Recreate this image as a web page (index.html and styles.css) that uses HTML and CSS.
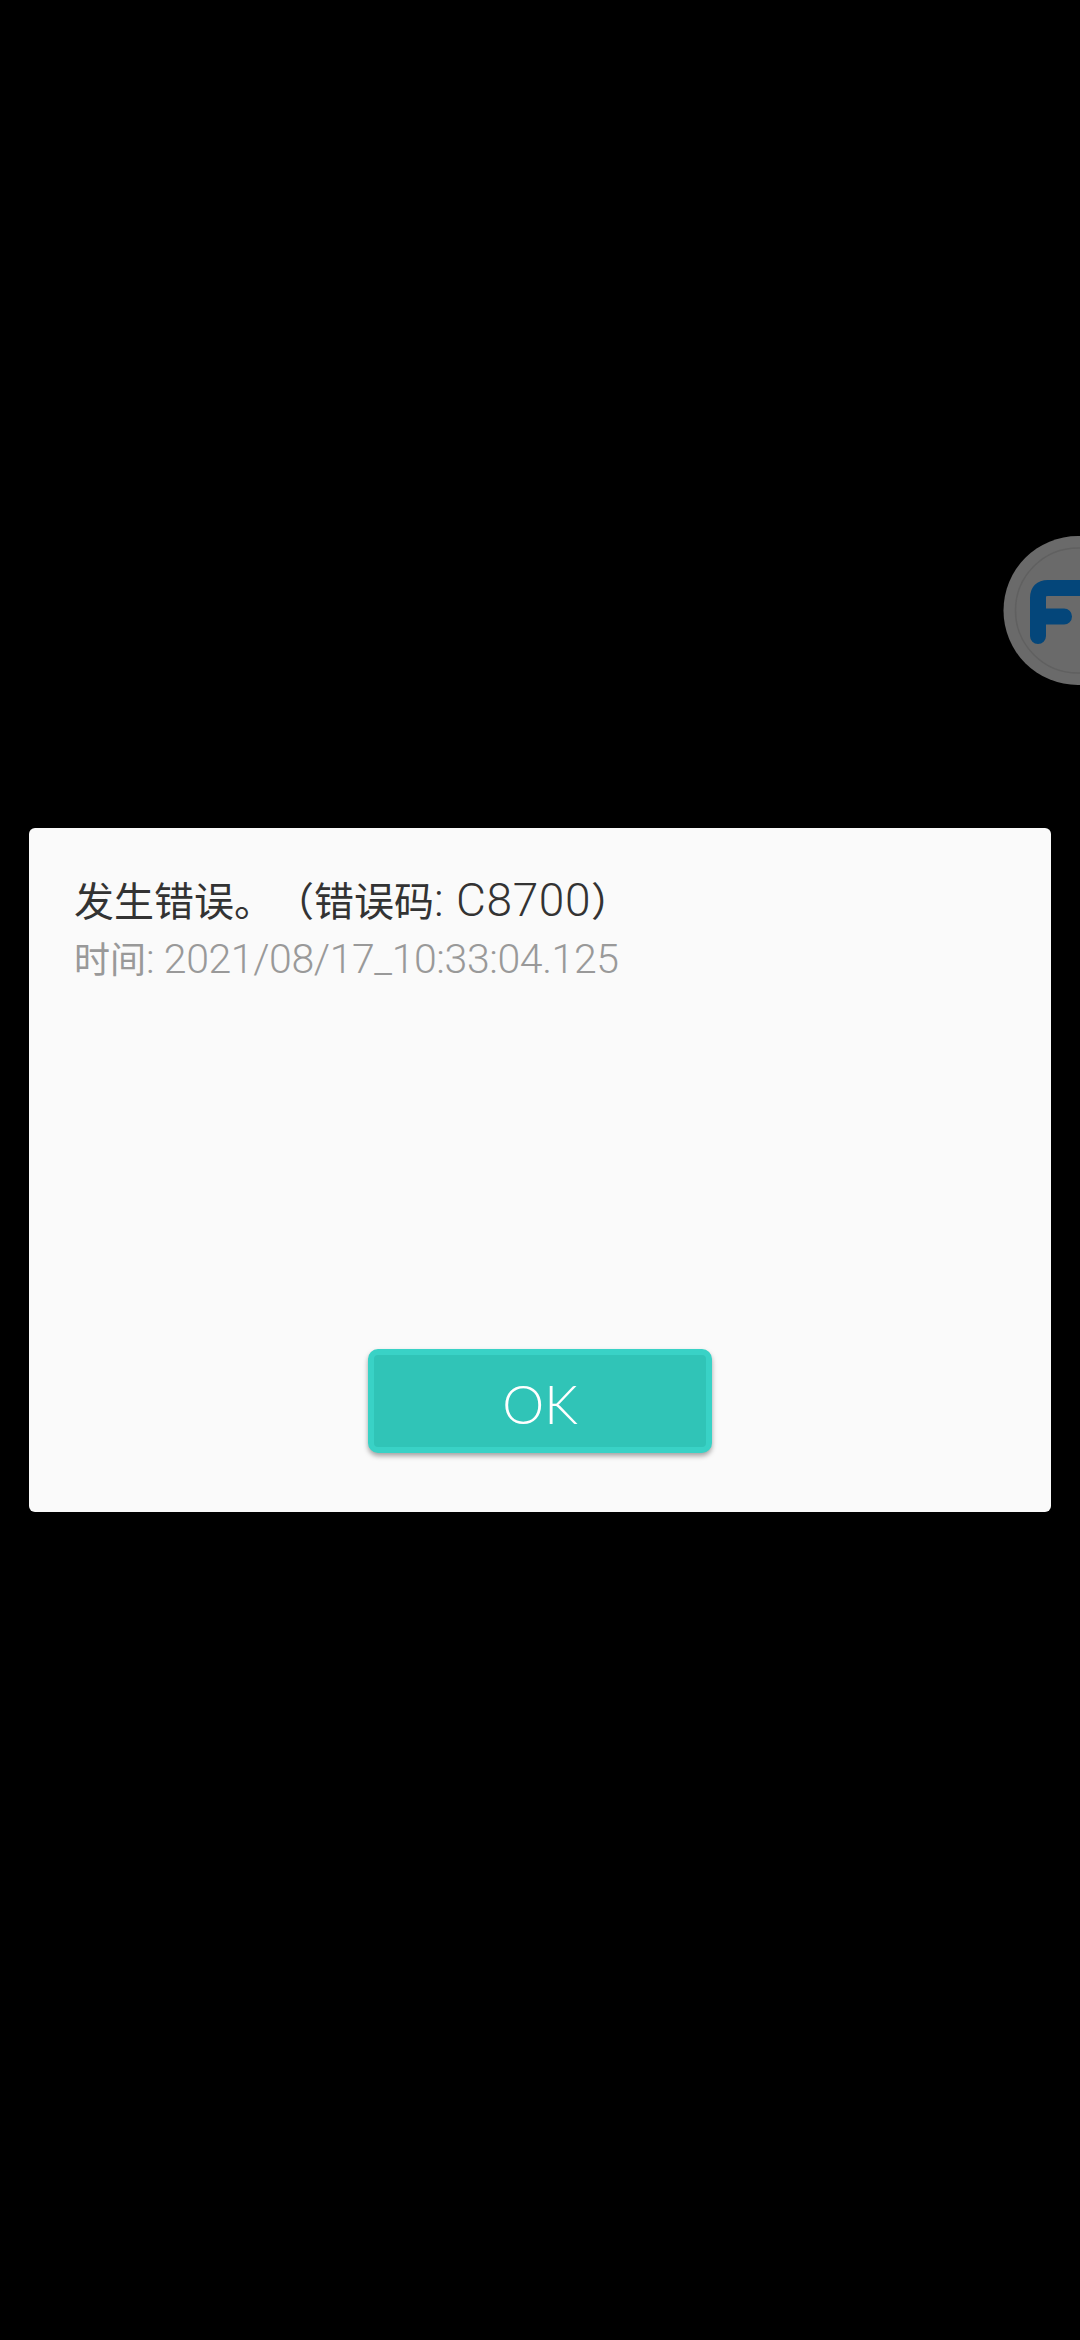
FILE: index.html
```html
<!DOCTYPE html>
<html lang="zh">
<head>
<meta charset="utf-8">
<title>错误</title>
<link rel="stylesheet" href="styles.css">
</head>
<body>
<main class="screen">
  <div class="float-badge">
    <svg class="float-svg" width="77" height="149" viewBox="0 0 77 149" aria-hidden="true">
      <circle cx="75" cy="74.5" r="74.5" fill="#6a6a6a"/>
      <circle cx="75" cy="74.5" r="62.5" fill="none" stroke="#606060" stroke-width="1.5"/>
      <path d="M35 100V62Q35 52 45 52H77M35 80.5H61" fill="none" stroke="#04467a" stroke-width="16" stroke-linecap="round"/>
    </svg>
  </div>
  <section class="dialog">
    <div class="message">
      <p class="title">发生错误。（错误码<span class="latin">: C8700</span>）</p>
      <p class="time">时间<span class="latin">: 2021/08/17_10:33:04.125</span></p>
    </div>
    <button class="ok" type="button">OK</button>
  </section>
</main>
</body>
</html>
```
FILE: styles.css
```css
* { box-sizing: border-box; }
html, body { margin: 0; padding: 0; background: #000; }
.screen {
  position: relative;
  width: 1080px;
  height: 2340px;
  padding: 828px 29px 0 29px;
  overflow: hidden;
  font-family: "Noto Sans CJK SC", sans-serif;
  text-spacing-trim: space-all;
}
.float-badge {
  position: absolute;
  left: 1003px;
  top: 536px;
  width: 77px;
  height: 149px;
}
.float-svg { display: block; }
.dialog {
  height: 684px;
  background: #fafafa;
  border-radius: 6px;
  padding: 44px 45px 59px;
  display: flex;
  flex-direction: column;
  align-items: center;
}
.message { width: 100%; flex: 1; }
.latin {
  font-family: "Roboto", sans-serif;
  font-weight: 300;
}
.title {
  margin: 0;
  font-size: 40px;
  line-height: 54px;
  color: #333;
}
.title .latin { font-size: 46px; letter-spacing: 0.6px; }
.time {
  margin: 5px 0 0;
  font-size: 36px;
  line-height: 50px;
  color: #999;
}
.time .latin { font-size: 41px; letter-spacing: -0.4px; }
.ok {
  width: 344px;
  height: 104px;
  border: 6px solid #39d2c6;
  border-radius: 10px;
  background: #30c4b7;
  box-shadow: 0 3px 5px rgba(0, 0, 0, 0.35);
  color: #fff;
  font-family: "Lato", sans-serif;
  font-size: 53px;
  font-weight: 300;
  padding: 4px 0 0;
}
```
